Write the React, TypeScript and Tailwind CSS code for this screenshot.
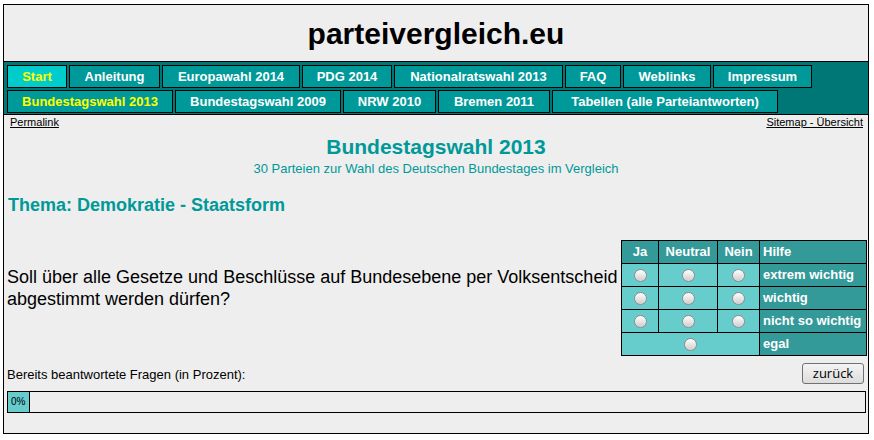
const navRow1 = [
  { label: "Start", w: "w-[60px]", active: true },
  { label: "Anleitung", w: "w-[91px]" },
  { label: "Europawahl 2014", w: "w-[138px]" },
  { label: "PDG 2014", w: "w-[90px]" },
  { label: "Nationalratswahl 2013", w: "w-[169px]" },
  { label: "FAQ", w: "w-[56px]" },
  { label: "Weblinks", w: "w-[88px]" },
  { label: "Impressum", w: "w-[99px]" },
];

const navRow2 = [
  { label: "Bundestagswahl 2013", w: "w-[166px]", current: true },
  { label: "Bundestagswahl 2009", w: "w-[166px]" },
  { label: "NRW 2010", w: "w-[93px]" },
  { label: "Bremen 2011", w: "w-[112px]" },
  { label: "Tabellen (alle Parteiantworten)", w: "w-[226px]" },
];

type NavItem = { label: string; w: string; active?: boolean; current?: boolean };

const NavButton = ({ item }: { item: NavItem }) => (
  <a
    href="#"
    className={`${item.w} h-[23px] flex items-center justify-center border border-black text-[13px] font-bold leading-none whitespace-nowrap ${
      item.active ? "bg-[#00cccc]" : "bg-[#009999]"
    } ${item.active || item.current ? "text-[#ffff00]" : "text-white"}`}
  >
    {item.label}
  </a>
);

const Radio = () => (
  <span className="inline-block w-[13px] h-[13px] rounded-full border border-[#8a8a8a] bg-linear-to-b from-white to-[#cdcdcd] shadow-[inset_0_0_1px_#ffffff] align-middle" />
);

const rows = ["extrem wichtig", "wichtig", "nicht so wichtig"];

const App = () => {
  return (
    <div className="min-h-[440px] bg-white pt-[4px] pl-[3px] font-['Liberation_Sans',Arial,sans-serif]">
      <div className="w-[866px] h-[430px] border border-black bg-[#eeeeee]">
        {/* Header */}
        <div className="h-[56px] flex items-center justify-center">
          <h1 className="text-[30px] font-bold text-black">parteivergleich.eu</h1>
        </div>

        {/* Navigation */}
        <div className="border-y border-black bg-[#007777] pl-[3px] pt-[3px] pb-[1px] flex flex-col gap-[2px]">
          <div className="flex gap-[2px]">
            {navRow1.map((item) => (
              <NavButton key={item.label} item={item} />
            ))}
          </div>
          <div className="flex gap-[2px]">
            {navRow2.map((item) => (
              <NavButton key={item.label} item={item} />
            ))}
          </div>
        </div>

        <div className="flex justify-between pl-[6px] pr-[5px] h-[14px] text-[11px] leading-[14px] text-black">
          <a href="#" className="underline">Permalink</a>
          <a href="#" className="underline">Sitemap - Übersicht</a>
        </div>

        <div className="text-center text-[#009999]">
          <h2 className="mt-[6px] text-[21px] leading-[24px] font-bold">Bundestagswahl 2013</h2>
          <p className="mt-[2px] text-[13px] leading-[15px]">
            30 Parteien zur Wahl des Deutschen Bundestages im Vergleich
          </p>
        </div>

        <h3 className="mt-[19px] pl-[4px] text-[18px] leading-[21px] font-bold text-[#009999]">
          Thema: Demokratie - Staatsform
        </h3>

        {/* Question + answers */}
        <div className="mt-[24px] flex justify-between pl-[3px] pr-[1px]">
          <p className="mt-[26px] text-[18px] leading-[22px] text-black whitespace-nowrap">
            Soll über alle Gesetze und Beschlüsse auf Bundesebene per Volksentscheid
            <br />
            abgestimmt werden dürfen?
          </p>
          <table className="border-collapse border border-black text-[13px] font-bold text-white">
            <thead>
              <tr className="bg-[#339999] h-[23px]">
                <th className="border border-black w-[37px] p-0 text-center">Ja</th>
                <th className="border border-black w-[59px] p-0 text-center">Neutral</th>
                <th className="border border-black w-[42px] p-0 text-center">Nein</th>
                <th className="border border-black w-[107px] p-0 pl-[3px] text-left">Hilfe</th>
              </tr>
            </thead>
            <tbody>
              {rows.map((r) => (
                <tr key={r} className="h-[23px]">
                  <td className="border border-black bg-[#66cccc] p-0 text-center">
                    <Radio />
                  </td>
                  <td className="border border-black bg-[#66cccc] p-0 text-center">
                    <Radio />
                  </td>
                  <td className="border border-black bg-[#66cccc] p-0 text-center">
                    <Radio />
                  </td>
                  <td className="border border-black bg-[#339999] p-0 pl-[3px] text-left whitespace-nowrap">{r}</td>
                </tr>
              ))}
              <tr className="h-[23px]">
                <td colSpan={3} className="border border-black bg-[#66cccc] p-0 text-center">
                  <Radio />
                </td>
                <td className="border border-black bg-[#339999] p-0 pl-[3px] text-left">egal</td>
              </tr>
            </tbody>
          </table>
        </div>

        {/* Progress */}
        <div className="mt-[7px] flex justify-between items-end pl-[3px] pr-[4px]">
          <span className="text-[13px] leading-[15px] text-black mb-[2px]">
            Bereits beantwortete Fragen (in Prozent):
          </span>
          <button className="w-[62px] h-[21px] rounded-[3px] border border-[#707070] bg-linear-to-b from-[#f4f4f4] to-[#dcdcdc] font-['Open_Sans',sans-serif] text-[13px] leading-none text-black">
            zurück
          </button>
        </div>
        <div className="mt-[7px] ml-[3px] w-[859px] h-[22px] border border-black flex">
          <div className="w-[22px] h-full bg-[#66cccc] border-r border-black text-[10px] leading-[20px] pl-[3px] text-black">
            0%
          </div>
        </div>
      </div>
    </div>
  );
};

export default App;
